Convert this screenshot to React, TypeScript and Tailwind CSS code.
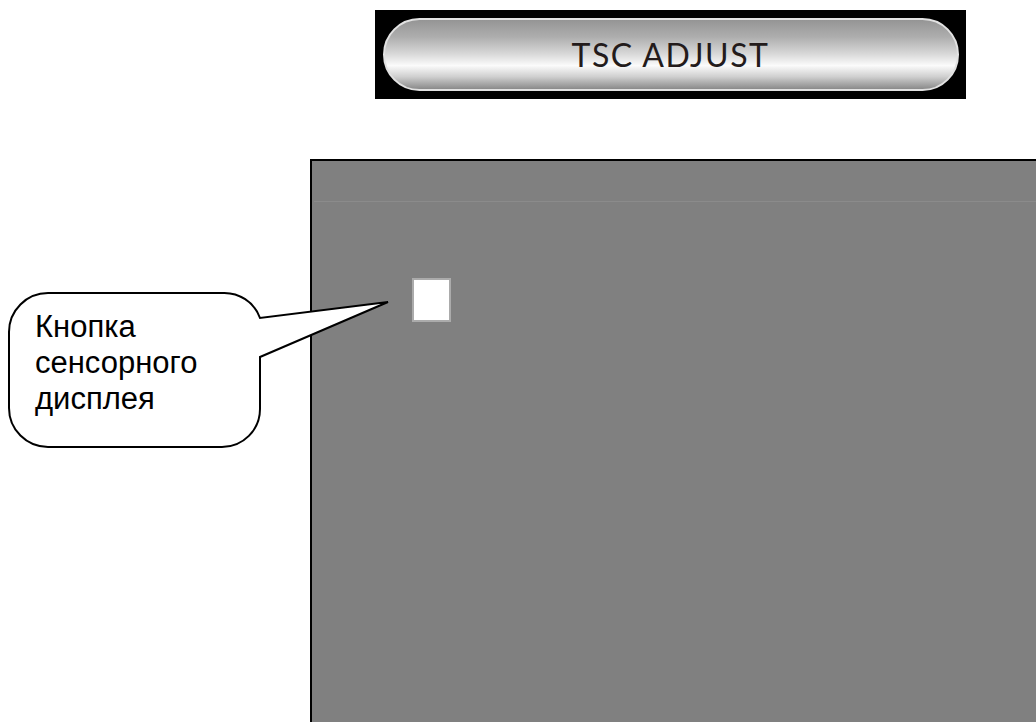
const Callout = () => {
  return (
    <div className="absolute left-0 top-0 w-[400px] h-[460px] pointer-events-none">
      <svg width="400" height="460" viewBox="0 0 400 460" className="absolute left-0 top-0">
        <path
          d="M 50 293 H 222 A 38 38 0 0 1 260 318 L 388 302 L 260 357 V 409 A 38 38 0 0 1 222 447 H 48 A 39 39 0 0 1 9 408 V 332 A 39 39 0 0 1 48 293 Z"
          fill="#ffffff"
          stroke="#000000"
          strokeWidth="2"
          strokeLinejoin="miter"
        />
      </svg>
      <div className="absolute left-[35px] top-[309px] text-[31px] leading-[36px] text-black font-['Liberation_Sans',Arial,sans-serif]">
        <p>Кнопка</p>
        <p>сенсорного</p>
        <p>дисплея</p>
      </div>
    </div>
  );
};

const App = () => {
  return (
    <div className="relative w-full h-[722px] bg-white overflow-hidden flex flex-col">
      {/* title banner */}
      <div className="ml-[375px] mt-[10px] w-[591px] h-[89px] bg-black flex items-center justify-center shrink-0">
        <div className="w-[576px] h-[73px] rounded-full border-2 border-[#e2e2e2] bg-[linear-gradient(to_bottom,#959595_0%,#aeaeae_25%,#dadada_50%,#fbfbfb_66%,#d0d0d0_82%,#8a8a8a_100%)] flex items-center justify-center">
          <span className="text-[32px] leading-none tracking-[1.5px] text-[#231b1b] font-['Lato',sans-serif] font-normal">
            TSC ADJUST
          </span>
        </div>
      </div>

      {/* touch screen area */}
      <div className="ml-[310px] mt-[60px] flex-1 border-l-2 border-t-2 border-black bg-[#808080] flex flex-col">
        <div className="h-[41px] ml-[2px] border-b border-[#8b8b8b] shrink-0" />
        <div className="mt-[76px] ml-[100px] w-[39px] h-[44px] bg-white border-2 border-[#ababab]" />
      </div>

      <Callout />
    </div>
  );
};

export default App;
